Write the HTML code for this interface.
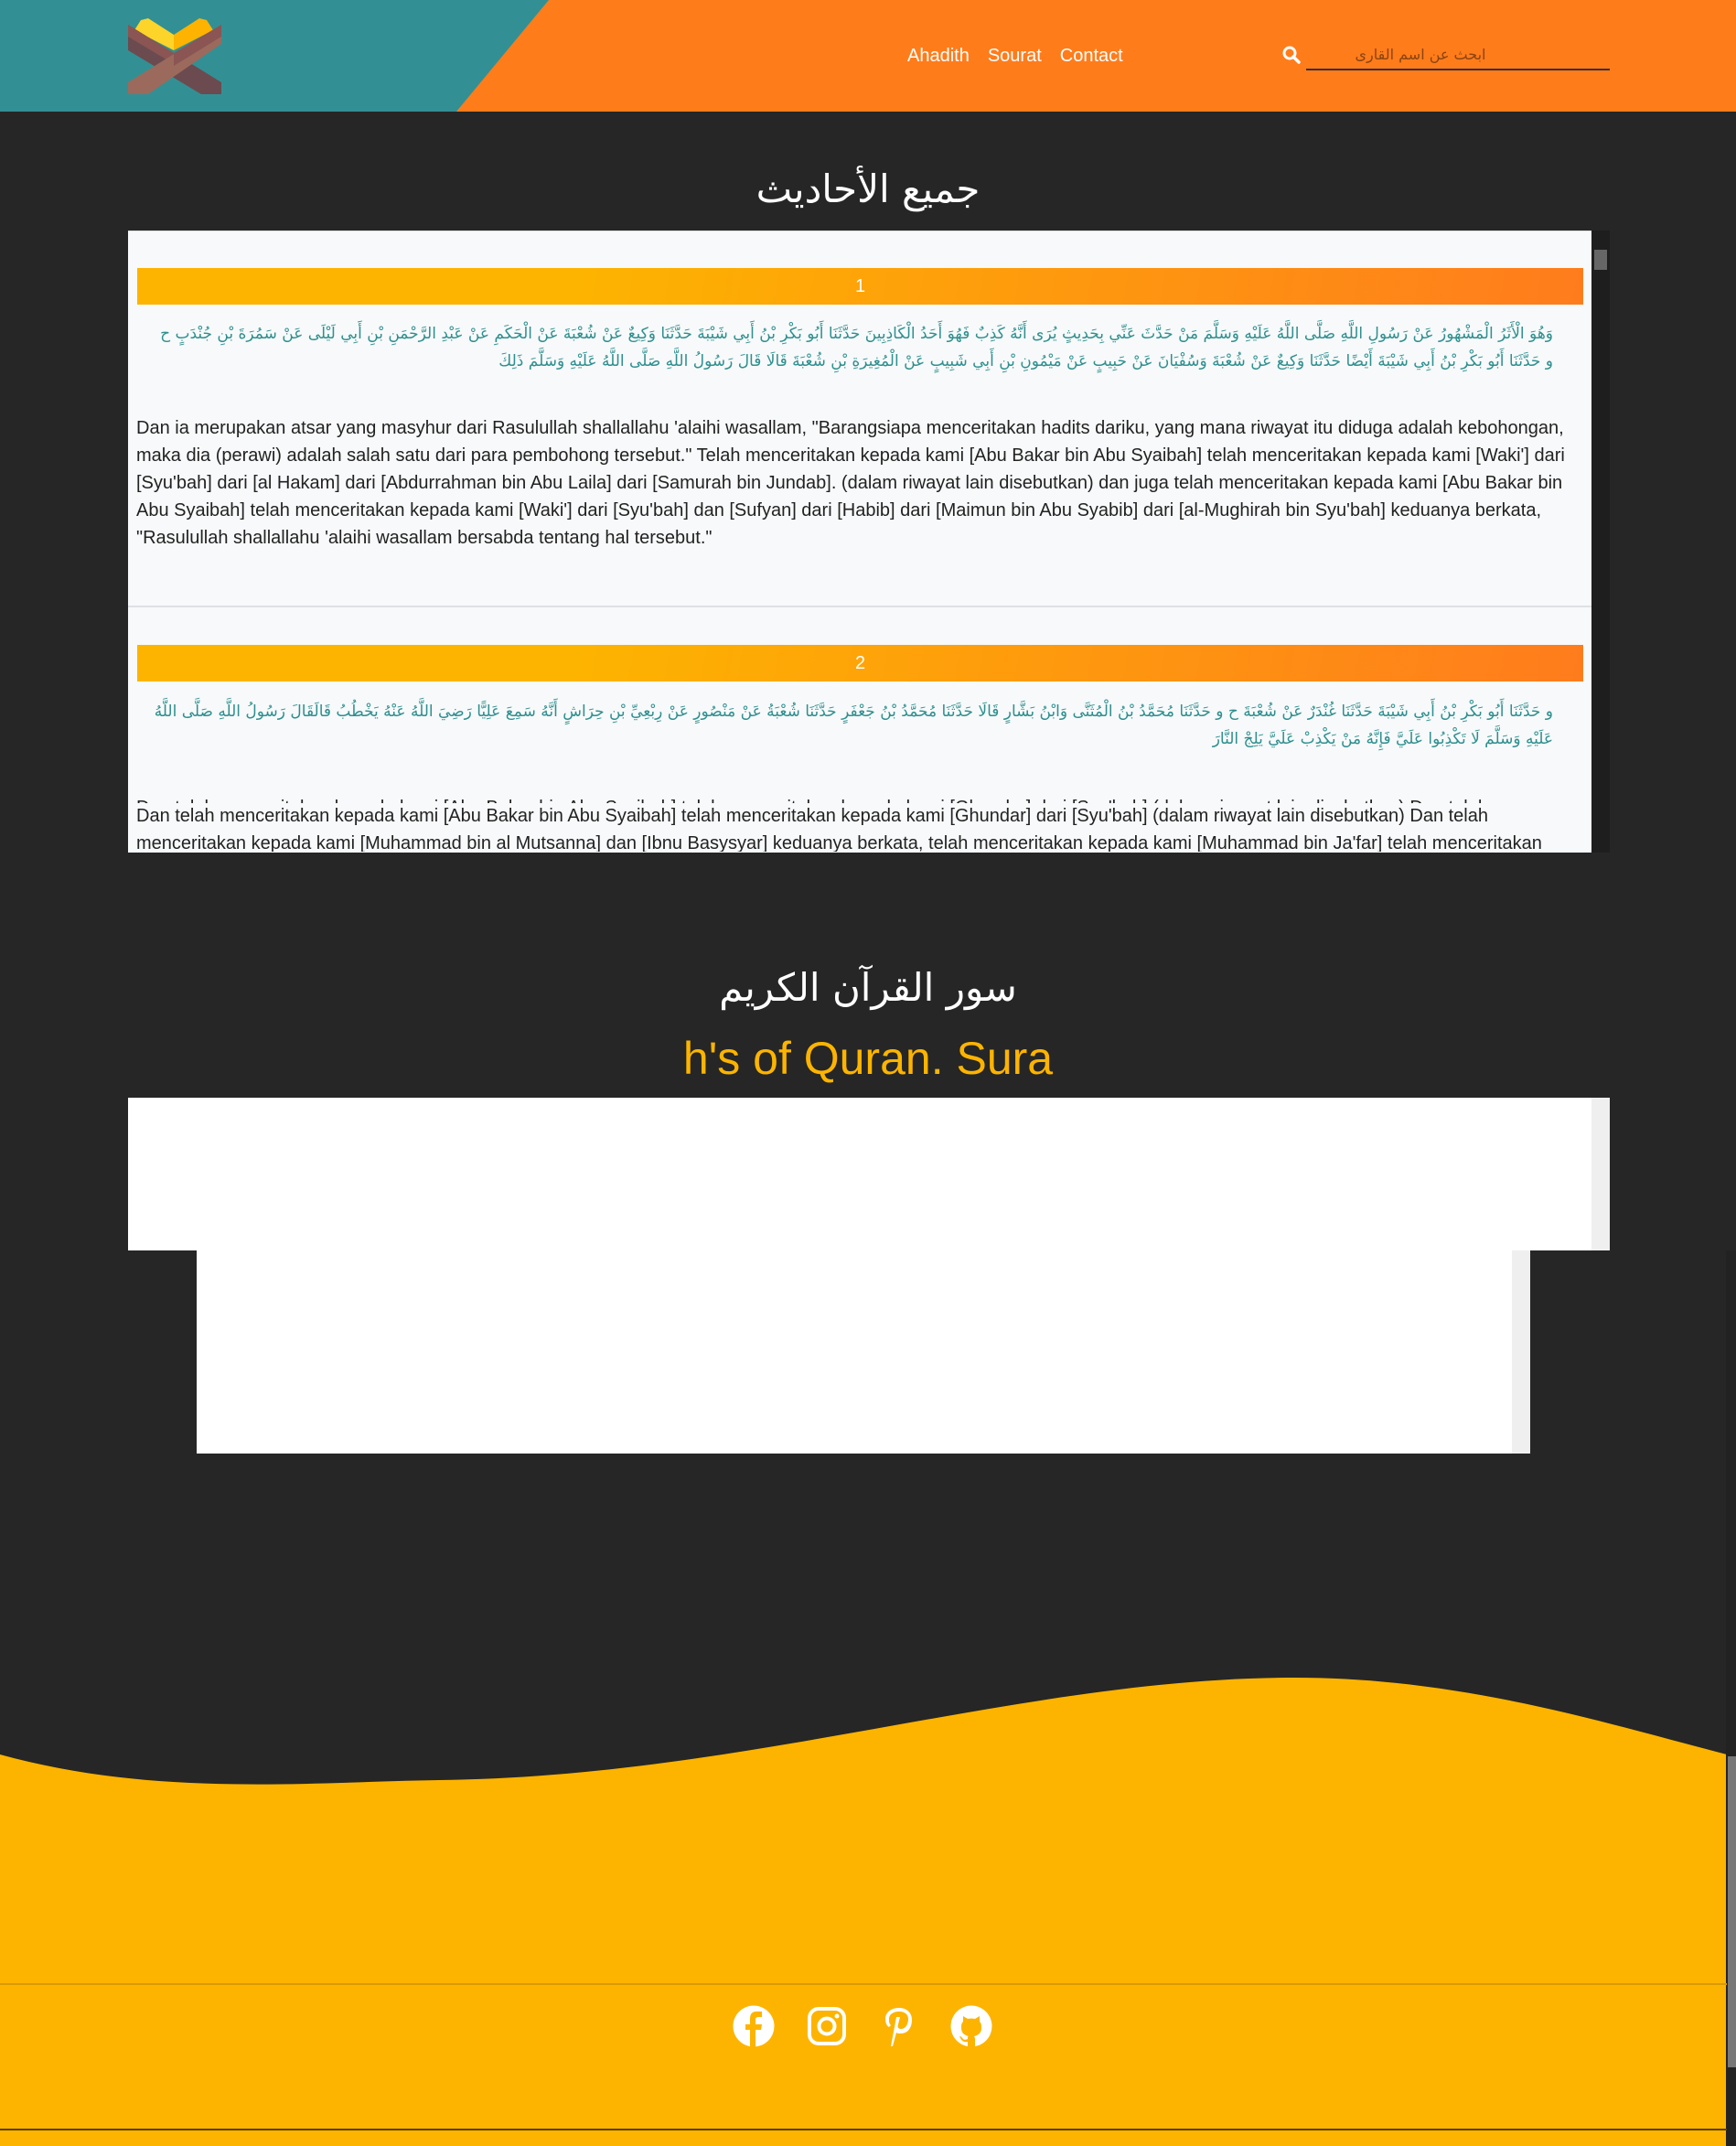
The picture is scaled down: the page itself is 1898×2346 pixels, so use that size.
<!DOCTYPE html>
<html><head><meta charset="utf-8"><style>
*{margin:0;padding:0;box-sizing:border-box}
body{width:1898px;height:2346px;background:#262626;position:relative;overflow:hidden;font-family:"Liberation Sans","Noto Sans CJK SC",sans-serif}
.abs{position:absolute}
.nav a{color:#fff;text-decoration:none;font-size:20px;margin-right:20px}
.bar{position:absolute;left:150px;width:1581px;height:40px;background:linear-gradient(100deg,#fdb400 30%,#ff7c1d 100%);color:#fff;text-align:center;font-size:20px;line-height:40px}
.ar{position:absolute;left:168px;width:1530px;direction:rtl;text-align:right;color:#2f8f8f;font-size:17px;line-height:30px;font-family:"DejaVu Sans","Liberation Sans",sans-serif}
.id{position:absolute;left:149px;width:1570px;color:#222;font-size:20px;line-height:30px}
</style></head><body>
<div class="abs" style="left:0;top:0;width:1898px;height:122px;background:#ff7c1b"></div>
<svg class="abs" style="left:0;top:0" width="600" height="122"><polygon points="0,0 600,0 499,122 0,122" fill="#329094"/></svg>
<svg class="abs" style="left:130px;top:10px" width="130" height="100" viewBox="0 0 130 100">
<polygon points="17,23 24,12 32,10 60,28 60,45" fill="#fcd42a"/>
<polygon points="103,23 96,12 88,10 60,28 60,45" fill="#fdb300"/>
<polygon points="10,17 112,80 112,93 90,93 10,45" fill="#6b4b4f"/>
<polygon points="10,17 60,48 60,60 10,30" fill="#8a5553"/>
<polygon points="10,80 112,17 112,38 32,93 10,93" fill="#9b6a5d"/>
<polygon points="60,48 112,17 112,30 60,62" fill="#8a5553"/>
</svg>
<div class="abs nav" style="left:992px;top:50px"><a>Ahadith</a><a>Sourat</a><a>Contact</a></div>
<svg class="abs" style="left:1401px;top:49px" width="22" height="22" viewBox="0 0 22 22"><circle cx="9" cy="9" r="6" fill="none" stroke="#fff" stroke-width="3"/><line x1="13" y1="13" x2="19" y2="19" stroke="#fff" stroke-width="3.5" stroke-linecap="round"/></svg>
<div class="abs" style="left:1428px;top:75px;width:332px;height:2px;background:#333"></div>
<div class="abs" style="left:1428px;top:50px;width:250px;text-align:center;color:#8a4412;font-size:16px;font-family:'DejaVu Sans',sans-serif">ابحث عن اسم القارى</div>

<div class="abs" style="left:0;top:182px;width:1898px;text-align:center;color:#fff;font-size:42px;font-family:'DejaVu Sans',sans-serif">جميع الأحاديث</div>

<div class="abs" style="left:140px;top:252px;width:1620px;height:680px;background:#f7f9fa;overflow:hidden;border-top:1px solid #ddd">
</div>
<div class="abs" style="left:1740px;top:252px;width:20px;height:680px;background:#1e1e1e"></div>
<div class="abs" style="left:1743px;top:273px;width:14px;height:22px;background:#666"></div>
<div class="bar" style="top:293px">1</div>
<div class="ar" style="top:350px">وَهُوَ الْأَثَرُ الْمَشْهُورُ عَنْ رَسُولِ اللَّهِ صَلَّى اللَّهُ عَلَيْهِ وَسَلَّمَ مَنْ حَدَّثَ عَنِّي بِحَدِيثٍ يُرَى أَنَّهُ كَذِبٌ فَهُوَ أَحَدُ الْكَاذِبِينَ حَدَّثَنَا أَبُو بَكْرِ بْنُ أَبِي شَيْبَةَ حَدَّثَنَا وَكِيعٌ عَنْ شُعْبَةَ عَنْ الْحَكَمِ عَنْ عَبْدِ الرَّحْمَنِ بْنِ أَبِي لَيْلَى عَنْ سَمُرَةَ بْنِ جُنْدَبٍ ح و حَدَّثَنَا أَبُو بَكْرِ بْنُ أَبِي شَيْبَةَ أَيْضًا حَدَّثَنَا وَكِيعٌ عَنْ شُعْبَةَ وَسُفْيَانَ عَنْ حَبِيبٍ عَنْ مَيْمُونِ بْنِ أَبِي شَبِيبٍ عَنْ الْمُغِيرَةِ بْنِ شُعْبَةَ قَالَا قَالَ رَسُولُ اللَّهِ صَلَّى اللَّهُ عَلَيْهِ وَسَلَّمَ ذَلِكَ</div>
<div class="id" style="top:453px">Dan ia merupakan atsar yang masyhur dari Rasulullah shallallahu 'alaihi wasallam, "Barangsiapa menceritakan hadits dariku, yang mana riwayat itu diduga adalah kebohongan, maka dia (perawi) adalah salah satu dari para pembohong tersebut." Telah menceritakan kepada kami [Abu Bakar bin Abu Syaibah] telah menceritakan kepada kami [Waki'] dari [Syu'bah] dari [al Hakam] dari [Abdurrahman bin Abu Laila] dari [Samurah bin Jundab]. (dalam riwayat lain disebutkan) dan juga telah menceritakan kepada kami [Abu Bakar bin Abu Syaibah] telah menceritakan kepada kami [Waki'] dari [Syu'bah] dan [Sufyan] dari [Habib] dari [Maimun bin Abu Syabib] dari [al-Mughirah bin Syu'bah] keduanya berkata, "Rasulullah shallallahu 'alaihi wasallam bersabda tentang hal tersebut."</div>
<div class="abs" style="left:140px;top:662px;width:1600px;height:2px;background:#dfe0e3"></div>
<div class="bar" style="top:705px">2</div>
<div class="ar" style="top:763px">و حَدَّثَنَا أَبُو بَكْرِ بْنُ أَبِي شَيْبَةَ حَدَّثَنَا غُنْدَرٌ عَنْ شُعْبَةَ ح و حَدَّثَنَا مُحَمَّدُ بْنُ الْمُثَنَّى وَابْنُ بَشَّارٍ قَالَا حَدَّثَنَا مُحَمَّدُ بْنُ جَعْفَرٍ حَدَّثَنَا شُعْبَةُ عَنْ مَنْصُورٍ عَنْ رِبْعِيِّ بْنِ حِرَاشٍ أَنَّهُ سَمِعَ عَلِيًّا رَضِيَ اللَّهُ عَنْهُ يَخْطُبُ قَالَقَالَ رَسُولُ اللَّهِ صَلَّى اللَّهُ عَلَيْهِ وَسَلَّمَ لَا تَكْذِبُوا عَلَيَّ فَإِنَّهُ مَنْ يَكْذِبْ عَلَيَّ يَلِجْ النَّارَ</div>
<div class="abs" style="left:140px;top:868px;width:1600px;height:63px;overflow:hidden">
<div class="id" style="left:9px;top:0;font-size:20px;line-height:30px;clip-path:inset(0 0 20px 0)">Dan telah menceritakan kepada kami [Abu Bakar bin Abu Syaibah] telah menceritakan kepada kami [Ghundar] dari [Syu'bah] (dalam riwayat lain disebutkan) Dan telah</div>
<div class="id" style="left:9px;top:9px">Dan telah menceritakan kepada kami [Abu Bakar bin Abu Syaibah] telah menceritakan kepada kami [Ghundar] dari [Syu'bah] (dalam riwayat lain disebutkan) Dan telah menceritakan kepada kami [Muhammad bin al Mutsanna] dan [Ibnu Basysyar] keduanya berkata, telah menceritakan kepada kami [Muhammad bin Ja'far] telah menceritakan</div>
</div>

<div class="abs" style="left:0;top:1055px;width:1898px;text-align:center;color:#fff;font-size:42px;font-family:'DejaVu Sans',sans-serif">سور القرآن الكريم</div>
<div class="abs" style="left:0;top:1128px;width:1898px;text-align:center;color:#fdb400;font-size:50px">h's of Quran. Sura</div>

<div class="abs" style="left:140px;top:1200px;width:1620px;height:167px;background:#fff"></div>
<div class="abs" style="left:1740px;top:1200px;width:20px;height:167px;background:#efefef"></div>
<div class="abs" style="left:215px;top:1367px;width:1458px;height:222px;background:#fff"></div>
<div class="abs" style="left:1653px;top:1367px;width:20px;height:222px;background:#efefef"></div>

<svg class="abs" style="left:0;top:1800px" width="1888" height="546" viewBox="0 0 1888 546"><path d="M0,118 C170,165 340,148 480,146 C820,142 1120,34 1416,34 C1600,34 1760,85 1888,118 L1888,546 L0,546 Z" fill="#fdb400"/></svg>
<div class="abs" style="left:1887px;top:1367px;width:11px;height:979px;background:#222"></div>
<div class="abs" style="left:1889px;top:1920px;width:9px;height:340px;background:#777"></div>
<div class="abs" style="left:0;top:2168px;width:1888px;height:2px;background:#d89a00"></div>
<div class="abs" style="left:0;top:2327px;width:1888px;height:2px;background:#5a4200"></div>

<svg class="abs" style="left:801px;top:2192px" width="46" height="46" viewBox="0 0 46 46"><circle cx="23" cy="23" r="22.5" fill="#fff"/><path d="M25,46 L25,27 L31,27 L32,21 L25,21 L25,16 C25,14 26,13 28,13 L32,13 L32,7 C30,7 28,7 26,7 C21,7 19,10 19,15 L19,21 L14,21 L14,27 L19,27 L19,46 Z" fill="#fdb400"/></svg>
<svg class="abs" style="left:883px;top:2194px" width="42" height="42" viewBox="0 0 42 42"><rect x="2" y="2" width="38" height="38" rx="10" fill="none" stroke="#fff" stroke-width="4"/><circle cx="21" cy="21" r="8.5" fill="none" stroke="#fff" stroke-width="4"/><circle cx="32" cy="10" r="2.5" fill="#fff"/></svg>
<svg class="abs" style="left:966px;top:2193px" width="34" height="46" viewBox="0 0 34 46"><path d="M17,2 C7,2 2,8 2,14 C2,19 4,22 6,23 L8,21 C6,19 6,17 6,14 C6,9 11,6 17,6 C23,6 27,9 27,14 C27,20 24,25 19,25 C16,25 15,23 16,20 L18,12 L14,12 L8,44 L10,44 L14,29 C15,30 17,30 19,30 C27,30 31,23 31,15 C31,7 25,2 17,2 Z" fill="#fff"/></svg>
<svg class="abs" style="left:1039px;top:2192px" width="46" height="46" viewBox="0 0 46 46"><circle cx="23" cy="23" r="22.5" fill="#fff"/><path d="M14,12 L19,15 C21,14.5 25,14.5 27,15 L32,12 L32,18 C34,20 34,22 34,25 C34,31 30,33 26,34 C27,35 27,37 27,38 L27,46 L19,46 L19,40 C14,41 12,38 11,36 L10,34 C12,34 13,36 14,37 C15,38 17,38 19,37 C19,35 19,34 20,34 C16,33 12,31 12,25 C12,22 12,20 14,18 Z" fill="#fdb400"/></svg>
</body></html>
